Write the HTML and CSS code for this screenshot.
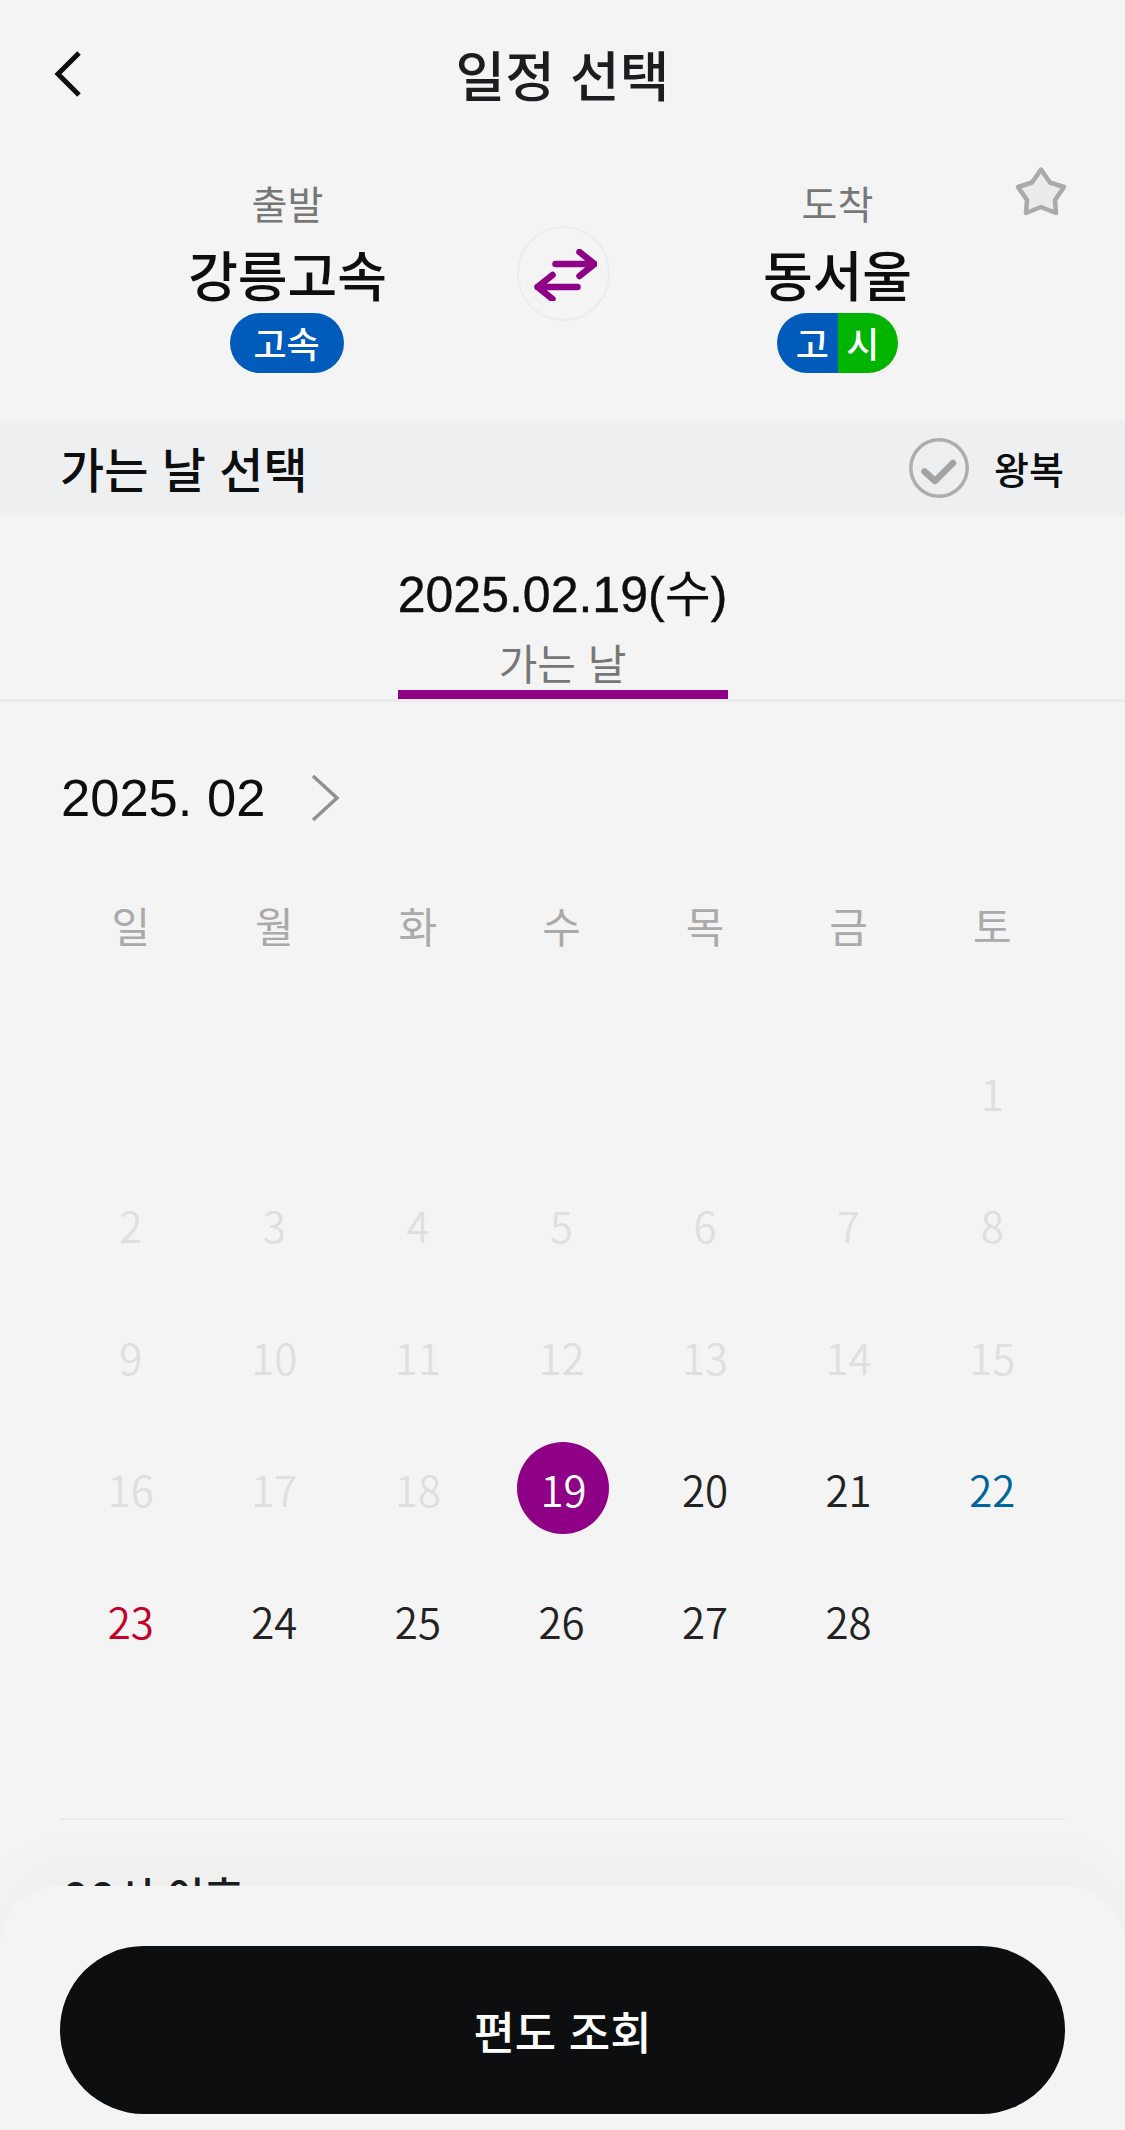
FILE: index.html
```html
<!DOCTYPE html>
<html lang="ko">
<head>
<meta charset="utf-8">
<title>일정 선택</title>
<link rel="stylesheet" href="styles.css">
</head>
<body>
<main class="screen">
  <header class="topbar">
    <svg class="back" viewBox="0 0 30 48" aria-hidden="true"><path d="M26 3 5 24l21 21" /></svg>
    <h1 class="title">일정 선택</h1>
  </header>

  <section class="route">
    <div class="stop">
      <span class="stop-label">출발</span>
      <strong class="stop-name">강릉고속</strong>
      <span class="badge badge-single">고속</span>
    </div>
    <button class="swap" type="button" aria-label="출발 도착 바꾸기">
      <svg viewBox="0 0 64 52"><path d="M22.500 15H61.500M46.500 3 61.500 15 46.500 27M44.500 38H4.500M19.500 26 4.500 38 19.500 50" /></svg>
    </button>
    <div class="stop">
      <span class="stop-label">도착</span>
      <strong class="stop-name">동서울</strong>
      <span class="badge badge-split"><span class="part part-blue">고</span><span class="part part-green">시</span></span>
    </div>
    <svg class="star" viewBox="0 0 54 54" aria-hidden="true"><path d="M27 4.500 36 17.500 50 22 41 35 42 48 27 42 12 48 13 35 4 22 18 17.500Z" /></svg>
  </section>

  <section class="band">
    <h2 class="band-title">가는 날 선택</h2>
    <div class="roundtrip">
      <svg class="check" viewBox="0 0 60 60" aria-hidden="true"><circle cx="30" cy="30" r="28.200" /><path d="M15.500 33.500 26 43 44 25" /></svg>
      <span class="roundtrip-label">왕복</span>
    </div>
  </section>

  <section class="tabs">
    <div class="tab">
      <span class="tab-date">2025.02.19(<span class="tab-day">수</span>)</span>
      <span class="tab-label">가는 날</span>
    </div>
  </section>

  <section class="calendar">
    <div class="month">
      <span class="month-label">2025. 02</span>
      <svg class="month-next" viewBox="0 0 28 48" aria-hidden="true"><path d="m2 2 24 22L2 46" /></svg>
    </div>
    <div class="weekdays">
      <span>일</span><span>월</span><span>화</span><span>수</span><span>목</span><span>금</span><span>토</span>
    </div>
    <div class="days">
      <span class="day off first">1</span>
      <span class="day off">2</span><span class="day off">3</span><span class="day off">4</span><span class="day off">5</span><span class="day off">6</span><span class="day off">7</span><span class="day off">8</span>
      <span class="day off">9</span><span class="day off">10</span><span class="day off">11</span><span class="day off">12</span><span class="day off">13</span><span class="day off">14</span><span class="day off">15</span>
      <span class="day off">16</span><span class="day off">17</span><span class="day off">18</span><span class="day selected"><span class="day-dot">19</span></span><span class="day">20</span><span class="day">21</span><span class="day sat">22</span>
      <span class="day sun">23</span><span class="day">24</span><span class="day">25</span><span class="day">26</span><span class="day">27</span><span class="day">28</span>
    </div>
  </section>

  <section class="times">
    <p class="times-label">00시 이후</p>
  </section>

  <footer class="action">
    <button class="primary" type="button">편도 조회</button>
  </footer>
</main>
</body>
</html>
```

FILE: styles.css
```css
* { box-sizing: border-box; }

html, body {
  margin: 0;
  padding: 0;
  background: #f4f4f4;
}

body {
  font-family: "Noto Sans CJK KR", "Noto Sans", sans-serif;
  color: #0c0e10;
}

h1, h2, p { margin: 0; font-weight: 500; }

button {
  font: inherit;
  border: 0;
  padding: 0;
}

.screen {
  position: relative;
  width: 1125px;
  height: 2130px;
  overflow: hidden;
  background: #f4f4f4;
}

/* top bar */
.topbar {
  position: relative;
  height: 150px;
  padding-bottom: 3px;
  display: flex;
  align-items: center;
  justify-content: center;
}

.back {
  position: absolute;
  left: 53px;
  top: 50px;
  width: 30px;
  height: 48px;
  fill: none;
  stroke: #0c0e10;
  stroke-width: 5;
}

.title {
  font-size: 54px;
  line-height: 72px;
  color: #1b1d20;
}

/* route */
.route {
  position: relative;
  height: 270px;
  padding-top: 25px;
  display: grid;
  grid-template-columns: 321px 93px 321px;
  column-gap: 68px;
  justify-content: center;
  align-items: start;
}

.stop {
  display: flex;
  flex-direction: column;
  align-items: center;
}

.stop-label {
  font-size: 39px;
  line-height: 54px;
  color: #777;
  margin-bottom: 8px;
}

.stop-name {
  font-size: 54px;
  line-height: 74px;
  margin-bottom: 2px;
  font-weight: 500;
  color: #0c0e10;
}

.badge {
  height: 60px;
  border-radius: 30px;
  color: #fff;
  font-size: 36px;
  line-height: 58px;
  font-weight: 500;
  overflow: hidden;
}

.badge-single {
  width: 114px;
  margin-right: 2px;
  text-align: center;
  background: #005bbb;
}

.badge-split {
  width: 121px;
  display: flex;
}

.part {
  flex: 1;
  text-align: center;
}

.part-blue { background: #005bbb; padding-left: 10px; }
.part-green { background: #00b400; padding-right: 10px; }

.swap {
  width: 93px;
  height: 95px;
  margin-top: 51px;
  margin-left: 1px;
  border-radius: 50%;
  background: #f4f4f4;
  border: 2px solid #ececee;
  display: flex;
  align-items: center;
  justify-content: center;
}

.swap svg {
  width: 64px;
  height: 52px;
  margin: 3px 0 0 2px;
  flex: none;
  fill: none;
  stroke: #8e0086;
  stroke-width: 6.500;
  stroke-linecap: round;
  stroke-linejoin: round;
}

.star {
  position: absolute;
  left: 1014px;
  top: 15px;
  width: 54px;
  height: 54px;
  fill: #ebebed;
  stroke: #aaaaac;
  stroke-width: 4.500;
  stroke-linejoin: round;
}

/* band */
.band {
  height: 96px;
  padding: 0 61px 0 60px;
  background: #eeeff1;
  display: flex;
  align-items: center;
  justify-content: space-between;
}

.band-title {
  font-size: 48px;
  line-height: 66px;
  margin-bottom: 2px;
  color: #0c0e10;
}

.roundtrip {
  display: flex;
  align-items: center;
  gap: 25px;
}

.check {
  width: 60px;
  height: 60px;
  fill: none;
  stroke: #adadad;
}

.check circle { stroke-width: 3.500; }
.check path { stroke-width: 6.500; stroke: #a3a3a3; stroke-linecap: round; stroke-linejoin: round; }

.roundtrip-label {
  font-size: 38px;
  line-height: 54px;
  font-weight: 500;
  color: #0c0e10;
}

/* tab */
.tabs {
  height: 186px;
  padding-top: 40px;
  display: flex;
  justify-content: center;
  border-bottom: 3px solid #ebebed;
}

.tab {
  width: 330px;
  height: 143px;
  display: flex;
  flex-direction: column;
  align-items: center;
  border-bottom: 9px solid #8e0086;
}

.tab-date {
  font-family: "Liberation Sans", "Noto Sans CJK KR", sans-serif;
  font-size: 50px;
  line-height: 68px;
  color: #0c0e10;
  -webkit-text-stroke: 0.4px #0c0e10;
}

.tab-day {
  font-family: "Noto Sans CJK KR", sans-serif;
  -webkit-text-stroke: 0;
}

.tab-label {
  margin-top: 5px;
  font-size: 42px;
  line-height: 56px;
  color: #777;
}

/* calendar */
.calendar {
  padding: 57px 61px 0 59px;
}

.month {
  display: flex;
  align-items: center;
  gap: 46px;
  height: 72px;
  padding-left: 2px;
}

.month-label {
  margin-top: 5px;
  font-family: "Liberation Sans", sans-serif;
  font-size: 52.500px;
  line-height: 72px;
  color: #0c0e10;
}

.month-next {
  width: 28px;
  height: 48px;
  margin-top: 5px;
  fill: none;
  stroke: #909090;
  stroke-width: 3.500;
}

.weekdays {
  margin-top: 59px;
  height: 70px;
  display: grid;
  grid-template-columns: repeat(7, 1fr);
  text-align: center;
  font-size: 42px;
  line-height: 70px;
  color: #aaa;
}

.days {
  margin-top: 66px;
  display: grid;
  grid-template-columns: repeat(7, 1fr);
  grid-template-rows: repeat(6, 132px);
  font-size: 42px;
  font-weight: 350;
}

.day {
  display: flex;
  align-items: center;
  justify-content: center;
  color: #222;
}

.first { grid-column-start: 7; }
.off { color: #dfdfe1; }
.sat { color: #00659f; }
.sun { color: #c4002b; }

.day-dot {
  width: 92px;
  height: 92px;
  margin-left: 4px;
  border-radius: 50%;
  background: #8e0086;
  color: #fff;
  display: flex;
  align-items: center;
  justify-content: center;
}

/* times */
.times {
  margin: 0 60px;
  border-top: 2px solid #eaeaec;
  padding-top: 48px;
}

.times-label {
  font-family: "Inter", "Noto Sans CJK KR", sans-serif;
  font-size: 42px;
  line-height: 60px;
  padding-left: 2px;
  font-weight: 500;
  color: #1b1d20;
}

/* bottom action */
.action {
  position: absolute;
  left: 0;
  right: 0;
  bottom: 0;
  height: 244px;
  padding: 60px 60px 16px;
  background: #f4f4f4;
  border-radius: 60px 60px 0 0;
  box-shadow: 0 -30px 50px rgba(30, 30, 60, 0.025);
}

.primary {
  display: block;
  width: 100%;
  height: 168px;
  border-radius: 84px;
  background: #0c0e10;
  color: #fff;
  font-size: 45px;
  font-weight: 500;
}
```
